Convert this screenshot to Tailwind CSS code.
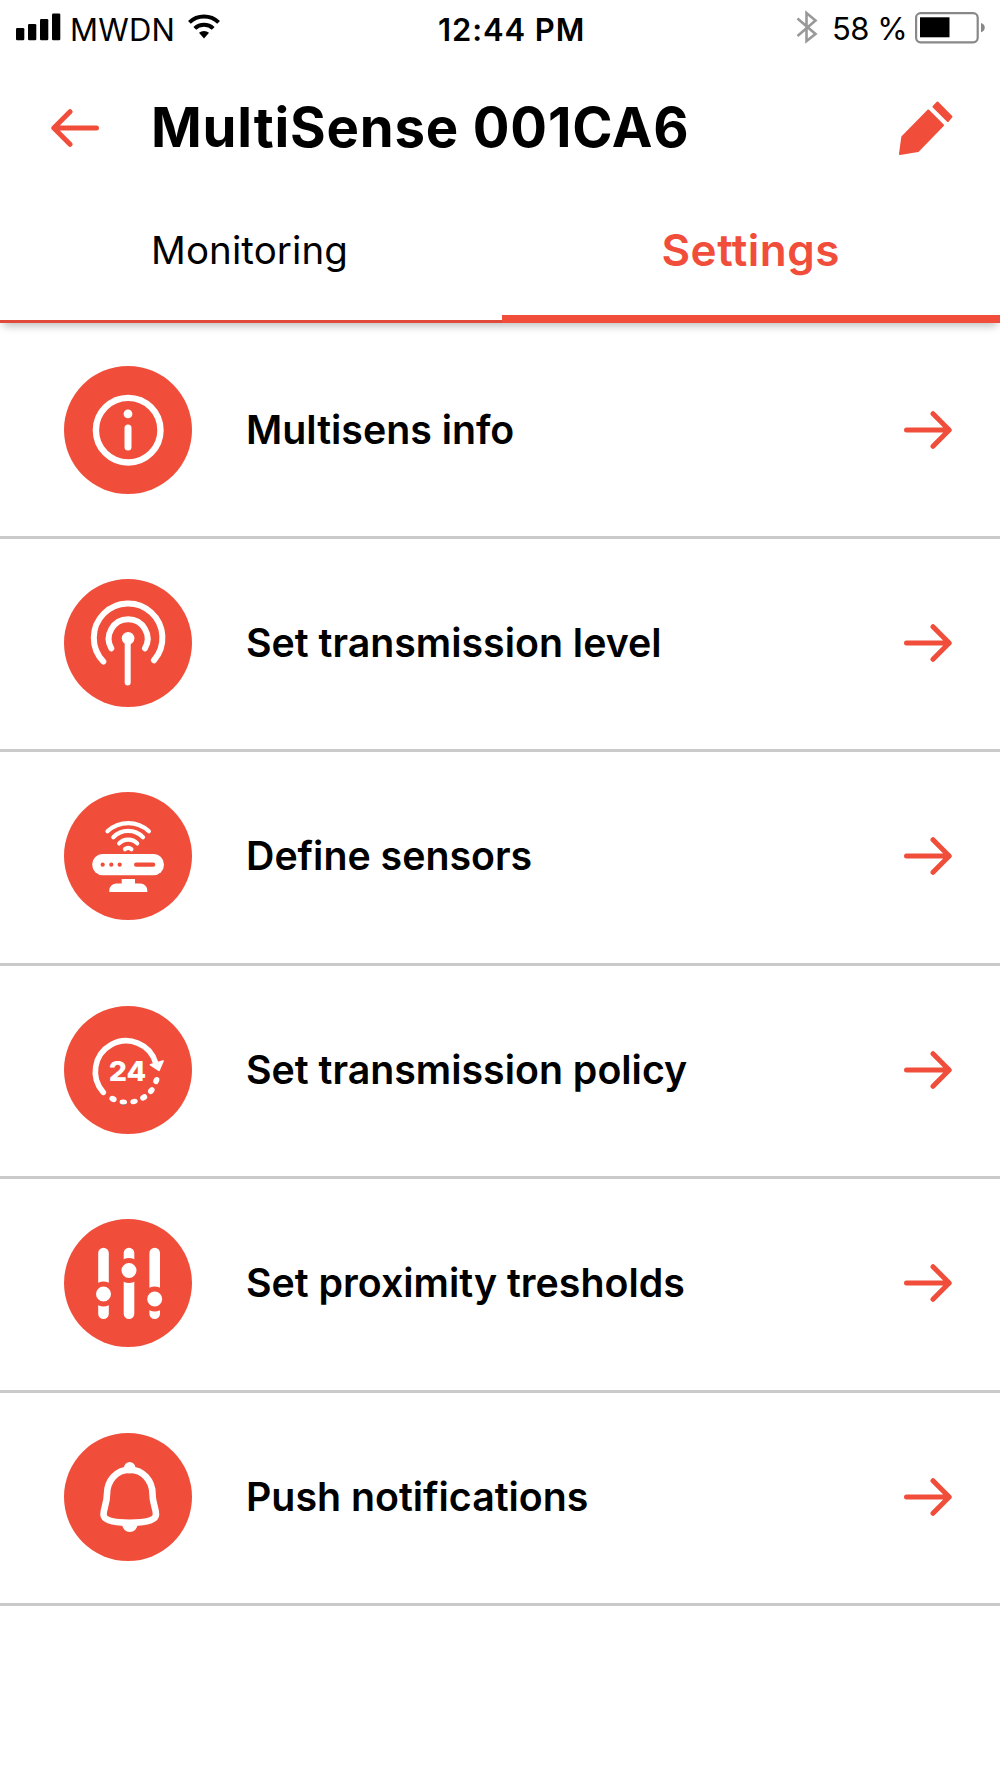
<!DOCTYPE html>
<html lang="en">
  <head>
    <meta charset="UTF-8" />
    <title>MultiSense 001CA6</title>
    <script src="https://cdn.jsdelivr.net/npm/@tailwindcss/browser@4"></script>
    <style>
      body {
        font-family: 'Inter', 'Liberation Sans', sans-serif;
      }
    </style>
  </head>
  <body class="w-[1000px] h-[1778px] bg-white text-black overflow-hidden">

    <!-- Status bar -->
    <div class="h-[60px] flex items-start whitespace-nowrap">
      <svg class="w-[46px] h-[28px] ml-4 mt-[13px] shrink-0" viewBox="0 0 46 28">
        <rect x="0" y="15" width="8.3" height="12.3" rx="1.2" />
        <rect x="12" y="11" width="8.3" height="16.3" rx="1.2" />
        <rect x="24" y="6" width="8.3" height="21.3" rx="1.2" />
        <rect x="36" y="0.5" width="8.3" height="26.8" rx="1.2" />
      </svg>
      <span class="w-[112px] ml-[8px] mt-[10px] text-[31px] leading-10 tracking-[0.2px]">MWDN</span>
      <svg class="w-[34px] h-[26px] ml-[5px] mt-[14px] shrink-0" viewBox="0 0 34 26" fill="none" stroke="#000" stroke-width="4">
        <path d="M2.4 8.4a21 21 0 0 1 29.2 0" />
        <path d="M7.8 14.4a13.4 13.4 0 0 1 18.4 0" />
        <path d="M12 18.8a7.5 7.5 0 0 1 10 0l-5 5.6z" fill="#000" stroke="none" />
      </svg>
      <span class="w-[150px] ml-[217px] mt-[10px] text-[31px] leading-10 font-semibold tracking-[0.9px]">12:44 PM</span>
      <svg class="w-[22px] h-[34px] ml-[208px] mt-[10px] shrink-0" viewBox="0 0 22 34" fill="none" stroke="#999" stroke-width="2.6">
        <path d="M1.5 8.5l18 15.5-9 7V3l9 7.5-18 15.5" />
      </svg>
      <span class="w-[76px] ml-[14px] mt-[9px] text-[31px] leading-10 tracking-[-0.5px]">58 %</span>
      <svg class="w-[72px] h-[32px] ml-[7px] mt-[12px] shrink-0" viewBox="0 0 72 32">
        <rect x="1.1" y="1.1" width="61.6" height="29.2" rx="4.5" fill="none" stroke="#888" stroke-width="2.2" />
        <rect x="5" y="5.3" width="29.5" height="20" />
        <path d="M66 11c5 1 5 8 0 9.3z" fill="#888" />
      </svg>
    </div>

    <!-- Title -->
    <header class="h-[132px] flex items-start">
      <svg class="w-12 h-[38px] ml-[51px] mt-[49px] shrink-0" viewBox="0 0 48 38" fill="none" stroke="#f04e3b" stroke-width="5" stroke-linecap="round" stroke-linejoin="round">
        <path d="M45.5 19H3M19 2.7L2.8 19L19 35.3" />
      </svg>
      <h1 class="w-[600px] ml-[52px] mt-[35px] text-[54.5px] leading-[64px] font-bold tracking-[0.8px]">MultiSense 001CA6</h1>
      <svg class="w-[54px] h-[54px] ml-[148px] mt-[41px] shrink-0" viewBox="0 0 54 54" fill="#f04e3b" stroke="#f04e3b" stroke-linejoin="round">
        <path d="M29.3 9.5L44 24.2L19 50L1 53L3.3 36z" stroke-width="2" />
        <path d="M38.5 1.5L52.5 15.6L48.8 20L34.5 5.8z" stroke-width="2" />
      </svg>
    </header>

    <!-- Tabs -->
    <nav class="h-[131px] flex items-stretch shadow-[0_6px_8px_-3px_rgba(0,0,0,0.25)]">
      <a class="w-[501.5px] border-b-3 border-[#e04a3a] pl-[151px] pt-[34px] text-[38.5px] leading-[48px] tracking-[0.1px]">Monitoring</a>
      <a class="flex-1 border-b-8 border-[#f04e3b] pl-[160px] pt-[33px] text-[44px] leading-[50px] font-semibold tracking-[0.5px] text-[#f04e3b]">Settings</a>
    </nav>

    <!-- Settings list -->
    <ul class="pt-[2.6px] text-[39.3px] font-semibold">
      <li class="h-[213.4px] flex items-start border-b-3 border-[#cacaca]">
        <svg class="w-32 h-32 ml-16 mt-[40px] shrink-0" viewBox="0 0 128 128">
          <circle cx="64" cy="64" r="64" fill="#f04e3b" />
          <circle cx="64.2" cy="64.2" r="32.3" fill="none" stroke="#fff" stroke-width="6.4" />
          <circle cx="64" cy="47.9" r="4.4" fill="#fff" />
          <path d="M64 62v19" stroke="#fff" stroke-width="7" stroke-linecap="round" />
        </svg>
        <span class="w-[600px] ml-[54px] mt-[79px] leading-[50px]">Multisens info</span>
        <svg class="w-12 h-[38px] ml-[58px] mt-[85px] shrink-0" viewBox="0 0 48 38" fill="none" stroke="#f04e3b" stroke-width="5" stroke-linecap="round" stroke-linejoin="round">
          <path d="M2.5 19H45M29 2.7L45.2 19L29 35.3" />
        </svg>
      </li>

      <li class="h-[213.4px] flex items-start border-b-3 border-[#cacaca]">
        <svg class="w-32 h-32 ml-16 mt-[40px] shrink-0" viewBox="0 0 128 128">
          <circle cx="64" cy="64" r="64" fill="#f04e3b" />
          <g fill="none" stroke="#fff" stroke-width="6" stroke-linecap="round">
            <path d="M39.3 82.5A34.3 34.3 0 1 1 90 81.3" />
            <path d="M47.3 69.3A19.4 19.4 0 1 1 81 69.3" />
            <path d="M63.7 60v43.5" />
          </g>
          <circle cx="64.1" cy="59.3" r="6.3" fill="#fff" />
        </svg>
        <span class="w-[600px] ml-[54px] mt-[79px] leading-[50px]">Set transmission level</span>
        <svg class="w-12 h-[38px] ml-[58px] mt-[85px] shrink-0" viewBox="0 0 48 38" fill="none" stroke="#f04e3b" stroke-width="5" stroke-linecap="round" stroke-linejoin="round">
          <path d="M2.5 19H45M29 2.7L45.2 19L29 35.3" />
        </svg>
      </li>

      <li class="h-[213.4px] flex items-start border-b-3 border-[#cacaca]">
        <svg class="w-32 h-32 ml-16 mt-[40px] shrink-0" viewBox="0 0 128 128">
          <circle cx="64" cy="64" r="64" fill="#f04e3b" />
          <g fill="none" stroke="#fff" stroke-width="4.2" stroke-linecap="round">
            <path d="M43.5 39.3A30.3 30.3 0 0 1 84.9 39.3" />
            <path d="M49.3 45.3A20.5 20.5 0 0 1 79 45.3" />
            <path d="M55.2 51.4A12.5 12.5 0 0 1 73.2 51.4" />
            <path d="M61 57.2A5 5 0 0 1 67.4 57.2" />
          </g>
          <rect x="28.3" y="62" width="71.7" height="21.3" rx="10.6" fill="#fff" />
          <g fill="#f04e3b">
            <circle cx="38.7" cy="72.7" r="2.1" />
            <circle cx="47.3" cy="72.7" r="2.1" />
            <circle cx="55.7" cy="72.7" r="2.1" />
            <rect x="70" y="70.6" width="21.3" height="4.2" rx="2.1" />
          </g>
          <path d="M57.7 87H71v4.5h5.3a7 7 0 0 1 7 7v1.5h-38v-1.5a7 7 0 0 1 7-7h5.4z" fill="#fff" />
        </svg>
        <span class="w-[600px] ml-[54px] mt-[79px] leading-[50px]">Define sensors</span>
        <svg class="w-12 h-[38px] ml-[58px] mt-[85px] shrink-0" viewBox="0 0 48 38" fill="none" stroke="#f04e3b" stroke-width="5" stroke-linecap="round" stroke-linejoin="round">
          <path d="M2.5 19H45M29 2.7L45.2 19L29 35.3" />
        </svg>
      </li>

      <li class="h-[213.4px] flex items-start border-b-3 border-[#cacaca]">
        <svg class="w-32 h-32 ml-16 mt-[40px] shrink-0" viewBox="0 0 128 128">
          <circle cx="64" cy="64" r="64" fill="#f04e3b" />
          <path d="M39.3 86.3A30.8 30.8 0 1 1 91.7 57" fill="none" stroke="#fff" stroke-width="5.6" stroke-linecap="round" />
          <path d="M86.5 58.8L99 55L95 64.2z" fill="#fff" stroke="#fff" stroke-width="1.8" stroke-linejoin="round" />
          <ellipse cx="59.5" cy="97.6" rx="2.5" ry="2" fill="#666" />
          <g fill="#fff">
            <ellipse cx="92.3" cy="74.6" rx="3.7" ry="2.9" transform="rotate(-70 92.3 74.6)" />
            <ellipse cx="87.3" cy="84.6" rx="3.7" ry="2.9" transform="rotate(-50 87.3 84.6)" />
            <ellipse cx="79.7" cy="91.4" rx="3.7" ry="2.9" transform="rotate(-33 79.7 91.4)" />
            <ellipse cx="70" cy="95.5" rx="3.7" ry="2.7" transform="rotate(-14 70 95.5)" />
            <ellipse cx="59.3" cy="96" rx="3.7" ry="2.5" transform="rotate(4 59.3 96)" />
            <ellipse cx="49" cy="93" rx="3.7" ry="2.9" transform="rotate(22 49 93)" />
          </g>
          <text x="44.8" y="75.3" font-size="27.5" font-weight="800" fill="#fff" textLength="37.5" lengthAdjust="spacingAndGlyphs">24</text>
        </svg>
        <span class="w-[600px] ml-[54px] mt-[79px] leading-[50px]">Set transmission policy</span>
        <svg class="w-12 h-[38px] ml-[58px] mt-[85px] shrink-0" viewBox="0 0 48 38" fill="none" stroke="#f04e3b" stroke-width="5" stroke-linecap="round" stroke-linejoin="round">
          <path d="M2.5 19H45M29 2.7L45.2 19L29 35.3" />
        </svg>
      </li>

      <li class="h-[213.4px] flex items-start border-b-3 border-[#cacaca]">
        <svg class="w-32 h-32 ml-16 mt-[40px] shrink-0" viewBox="0 0 128 128">
          <circle cx="64" cy="64" r="64" fill="#f04e3b" />
          <path d="M39.5 34v60.7M65 34v60.7M90.7 34v60.7" stroke="#fff" stroke-width="10.6" stroke-linecap="round" />
          <g fill="#fff" stroke="#f04e3b" stroke-width="5">
            <circle cx="39.5" cy="75" r="10" />
            <circle cx="65" cy="51.5" r="10" />
            <circle cx="90.7" cy="80" r="10" />
          </g>
        </svg>
        <span class="w-[600px] ml-[54px] mt-[79px] leading-[50px]">Set proximity tresholds</span>
        <svg class="w-12 h-[38px] ml-[58px] mt-[85px] shrink-0" viewBox="0 0 48 38" fill="none" stroke="#f04e3b" stroke-width="5" stroke-linecap="round" stroke-linejoin="round">
          <path d="M2.5 19H45M29 2.7L45.2 19L29 35.3" />
        </svg>
      </li>

      <li class="h-[213.4px] flex items-start border-b-3 border-[#cacaca]">
        <svg class="w-32 h-32 ml-16 mt-[40px] shrink-0" viewBox="0 0 128 128">
          <circle cx="64" cy="64" r="64" fill="#f04e3b" />
          <path d="M65.7 36.8C52 36.8 43 48 43 61C43 71 39.5 75 39.5 81.5C39.5 87.5 50 89.7 65.7 89.7C81.4 89.7 92 87.5 92 81.5C92 75 88.5 71 88.5 61C88.5 48 79.4 36.8 65.7 36.8z" fill="none" stroke="#fff" stroke-width="6.6" />
          <circle cx="65.7" cy="34.7" r="5.7" fill="#fff" />
          <path d="M58 91.5h15.7a7.9 8.5 0 0 1-15.7 0z" fill="#fff" />
        </svg>
        <span class="w-[600px] ml-[54px] mt-[79px] leading-[50px]">Push notifications</span>
        <svg class="w-12 h-[38px] ml-[58px] mt-[85px] shrink-0" viewBox="0 0 48 38" fill="none" stroke="#f04e3b" stroke-width="5" stroke-linecap="round" stroke-linejoin="round">
          <path d="M2.5 19H45M29 2.7L45.2 19L29 35.3" />
        </svg>
      </li>
    </ul>
  </body>
</html>
